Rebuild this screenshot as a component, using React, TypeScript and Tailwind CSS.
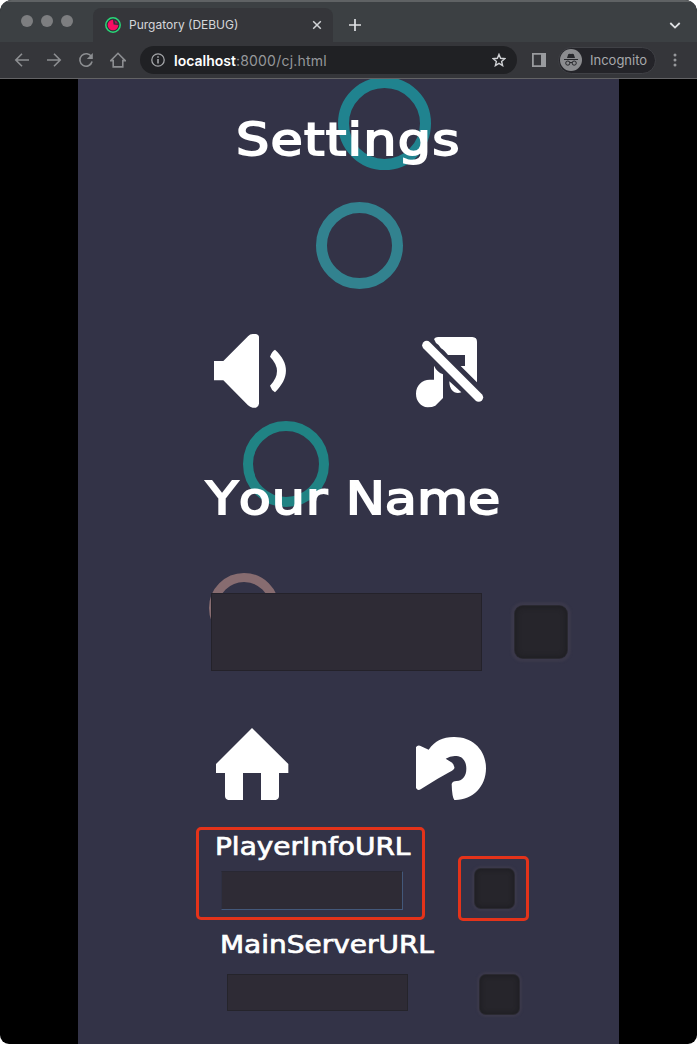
import React from 'react';

const gameText =
  'origin-left scale-x-[1.165] whitespace-nowrap font-["DejaVu_Sans",sans-serif] font-normal leading-none text-white [font-kerning:none]';

function BrowserTabs() {
  return (
    <div className="flex h-[42px] items-end border-t-2 border-[#5f6264] bg-[#3c4043]">
      <div className="flex h-[40px] w-[93px] items-center gap-2 pl-[21px] pb-[2px]">
        <span className="size-3 rounded-full bg-[#7d7e80]" />
        <span className="size-3 rounded-full bg-[#7d7e80]" />
        <span className="size-3 rounded-full bg-[#7d7e80]" />
      </div>
      <div className="flex h-[34px] w-[240px] items-center rounded-t-lg bg-[#35363a] pl-3 pr-[11px]">
        <svg className="size-4" viewBox="0 0 16 16">
          <circle cx="8" cy="8" r="7.2" fill="#33313a" stroke="#28d878" strokeWidth="1.5" />
          <path d="M8 2.7A5.3 5.3 0 1 0 13.3 8L8.6 7.6Z" fill="#f80d63" />
          <path d="M9.5 3.2A5.2 5.2 0 0 1 12.8 6.4L10.2 6.4Z" fill="#b01657" />
        </svg>
        <span className="ml-2 grow whitespace-nowrap font-[Inter,sans-serif] text-[12px] text-[#d5d7da]">
          Purgatory (DEBUG)
        </span>
        <svg className="size-[10px]" viewBox="0 0 10 10" stroke="#d2d4d7" strokeWidth="1.5">
          <path d="M1.2 1.2 8.8 8.8M8.8 1.2 1.2 8.8" />
        </svg>
      </div>
      <div className="flex h-[34px] grow items-center justify-between pl-4 pr-[16px]">
        <svg className="size-3" viewBox="0 0 12 12" stroke="#dfe1e4" strokeWidth="1.7">
          <path d="M6 0v12M0 6h12" />
        </svg>
        <svg className="h-[7px] w-[12px]" viewBox="0 0 12 7" fill="none" stroke="#dfe1e4" strokeWidth="1.8">
          <path d="M1.3 1 6 5.6 10.7 1" />
        </svg>
      </div>
    </div>
  );
}

function BrowserToolbar() {
  return (
    <div className="flex h-[37px] items-center border-b border-[#636365] bg-[#35363a] font-[Inter,sans-serif]">
      <div className="flex w-[140px] shrink-0 items-center gap-4 pl-[14px]">
        <svg className="size-4" viewBox="0 0 16 16" fill="none" stroke="#8c8e91" strokeWidth="1.6">
          <path d="M15 8H2M8 1.7 1.8 8 8 14.3" />
        </svg>
        <svg className="size-4" viewBox="0 0 16 16" fill="none" stroke="#8c8e91" strokeWidth="1.6">
          <path d="M1 8h13M8 1.7 14.2 8 8 14.3" />
        </svg>
        <svg className="size-4" viewBox="0 0 16 16" fill="none" stroke="#8c8e91" strokeWidth="1.6">
          <path d="M13.5 4.9A6.2 6.2 0 1 0 14.1 9.5" />
          <path d="M14.8 1v6H8.8Z" fill="#8c8e91" stroke="none" />
        </svg>
        <svg className="size-4" viewBox="0 0 16 16" fill="none" stroke="#8c8e91" strokeWidth="1.6">
          <path d="M.8 8.6 8 1.3l7.2 7.3h-2.4v6.3H3.2V8.6Z" />
        </svg>
      </div>
      <div className="flex h-7 w-[377px] shrink-0 items-center rounded-full bg-[#202124] pl-[11px] pr-[11px]">
        <svg className="size-[14px]" viewBox="0 0 14 14" fill="none" stroke="#a4a6a9" strokeWidth="1.3">
          <circle cx="7" cy="7" r="6.2" />
          <path d="M7 6v4.5M7 3.3v1.5" strokeWidth="1.6" />
        </svg>
        <span className="ml-[9px] grow whitespace-nowrap text-[14px] tracking-[0.015em] text-[#96989b]">
          <span className="font-semibold tracking-normal text-white">localhost</span>:8000/cj.html
        </span>
        <svg className="size-[14px]" viewBox="0 0 14 14" fill="none" stroke="#d0d2d5" strokeWidth="1.4">
          <path d="m7 1.4 1.6 3.9 4.2.4-3.2 2.8 1 4.1L7 10.4l-3.6 2.2 1-4.1L1.2 5.7l4.2-.4Z" />
        </svg>
      </div>
      <svg className="ml-[15px] size-[14px] shrink-0" viewBox="0 0 14 14">
        <path d="M.9.9h12.2v12.2H.9Z" fill="none" stroke="#999b9e" strokeWidth="1.8" />
        <path d="M9 0h5v14H9Z" fill="#999b9e" />
      </svg>
      <div className="ml-3 flex h-[27px] w-[98px] shrink-0 items-center rounded-full border border-[#404146] bg-[#242429] pl-[1px]">
        <svg className="size-[22px]" viewBox="0 0 22 22">
          <circle cx="11" cy="11" r="11" fill="#8b8c8f" />
          <path d="M7 9 8.2 5.2l1.2-.5 1.6.4 1.6-.4 1.2.5L15 9Z" fill="#26272b" />
          <path d="M4 10.5h14" stroke="#26272b" strokeWidth="1" />
          <g fill="none" stroke="#26272b" strokeWidth="1">
            <circle cx="7.8" cy="14.1" r="2.1" />
            <circle cx="14.2" cy="14.1" r="2.1" />
            <path d="M9.8 13.7q1.2-.6 2.4 0" />
          </g>
        </svg>
        <span className="ml-2 pt-px text-[13px] text-[#a8a9ac]">Incognito</span>
      </div>
      <svg className="ml-[17px] h-[14px] w-[4px] shrink-0" viewBox="0 0 4 14" fill="#96989b">
        <circle cx="2" cy="2" r="1.5" />
        <circle cx="2" cy="7" r="1.5" />
        <circle cx="2" cy="12" r="1.5" />
      </svg>
    </div>
  );
}

function Bubbles() {
  return (
    <>
      <span className="absolute left-[260px] top-[-2px] size-[93px] rounded-full border-[11px] border-[#20838f]" />
      <span className="absolute left-[238px] top-[123px] size-[87px] rounded-full border-[11px] border-[#32828f]" />
      <span className="absolute left-[165px] top-[342px] size-[86px] rounded-full border-[10.5px] border-[#208384]" />
      <span className="absolute left-[131px] top-[494px] size-[70px] rounded-full border-[9px] border-[#876c70]" />
    </>
  );
}

function PlainButton({ large = false }: { large?: boolean }) {
  return large ? (
    <button className="size-[52px] rounded-[8px] bg-[#26252b] shadow-[0_0_0_1px_#2a2931,0_0_2px_4px_#3b394b,inset_0_0_5px_1px_#1e1e22]" aria-label="Confirm" />
  ) : (
    <button className="size-[39px] rounded-[6px] bg-[#26252b] shadow-[0_0_0_1px_#2a2931,0_0_2px_3px_#3b394b,inset_0_0_4px_1px_#1e1e22]" aria-label="Confirm" />
  );
}

function SpeakerIcon() {
  return (
    <svg className="size-20" viewBox="30 30 240 240" fill="white">
      <path d="M42 123H70L144 49Q150 42 158 42H168Q177 44 177 52V251Q176 260 168 263H158Q150 262 144 256L70 181H42Z" />
      <path d="M225 89C270 130 268 174 225 217Q214 210 210 197Q252 153 210 110Q216 93 225 89Z" />
    </svg>
  );
}

function MusicOffIcon() {
  return (
    <svg className="size-20" viewBox="630 30 240 240" fill="white">
      <path d="M702 57Q706 51 714 51H817Q831 52 831 65V187L782 138H795V105H744Q732 90 723 85Q716 73 708 69Z" />
      <path d="M702 137Q710 155 729 163V234L706 257Q697 262 683 262C662 260 648 243 648 221C648 196 666 179 689 179H702Z" />
      <path d="M748 184 784 217C765 224 748 212 748 184Z" />
      <path d="M680 76 836 232" stroke="white" strokeWidth="27" strokeLinecap="round" />
    </svg>
  );
}

function HomeIcon() {
  return (
    <svg className="size-20" viewBox="60 30 240 240" fill="white">
      <path d="M186 39 295 147V174H267V244Q266 254 257 255H213V174H159V255H115Q106 254 105 244V174H78V147Z" />
    </svg>
  );
}

function UndoIcon() {
  return (
    <svg className="size-20" viewBox="660 30 240 240" fill="white">
      <path d="M678 97Q681 90 690 92L716 104C735 77 758 66 791 66C847 65 888 104 888 160C888 216 846 257 793 255Q786 246 785 207Q787 198 800 198C819 197 829 181 829 161C829 138 817 124 800 123Q782 121 767 131L784 142Q795 149 793 160Q792 165 779 171L743 191L692 223Q683 228 678 219Z" />
    </svg>
  );
}

export default function App() {
  return (
    <div className="bg-white">
      <div className="flex h-[1044px] w-[697px] flex-col overflow-hidden rounded-t-[12px] rounded-b-[9px] bg-black">
        <BrowserTabs />
        <BrowserToolbar />
        <main className="flex grow justify-center">
          <section className="relative isolate flex w-[541px] flex-col items-start overflow-hidden bg-[#333347]">
            <div className="absolute inset-0 -z-10">
              <Bubbles />
            </div>

            <h1 className={`ml-[158px] mt-[38px] text-[45px] tracking-[1.05px] [-webkit-text-stroke:1.8px_white] ${gameText}`}>Settings</h1>

            <div className="ml-[132px] mt-[168px] flex gap-[120px]">
              <SpeakerIcon />
              <MusicOffIcon />
            </div>

            <h2 className={`ml-[128px] mt-[66px] text-[45px] [-webkit-text-stroke:1.8px_white] ${gameText}`}>
              <span className="tracking-[0.7px]">Your </span>
              <span>Name</span>
            </h2>

            <div className="ml-[133px] mt-[72px] flex h-[78px] items-center gap-[33px]">
              <input className="h-[78px] w-[271px] border border-[#24222a] bg-[#2e2b35] outline-none" aria-label="Your Name" />
              <PlainButton large />
            </div>

            <div className="ml-[132px] mt-[54px] flex gap-[120px]">
              <HomeIcon />
              <UndoIcon />
            </div>

            <h3 className={`ml-[137px] mt-[30px] text-[24px] [-webkit-text-stroke:0.7px_white] ${gameText}`}>PlayerInfoURL</h3>
            <div className="ml-[143px] mt-[6px] flex h-[46px] items-center gap-[72px]">
              <input
                className="mt-[4px] h-[39px] w-[182px] border border-b-[#43587a] border-l-[#2e3042] border-r-[#43587a] border-t-[#292833] bg-[#2e2b35] outline-none"
                aria-label="PlayerInfoURL"
              />
              <PlainButton />
            </div>

            <h3 className={`ml-[142px] mt-[22px] text-[24px] [-webkit-text-stroke:0.7px_white] ${gameText}`}>MainServerURL</h3>
            <div className="ml-[149px] mt-[14px] flex h-[46px] items-center gap-[72px]">
              <input className="mb-[3px] h-[37px] w-[181px] border border-[#25242b] bg-[#2e2b35] outline-none" aria-label="MainServerURL" />
              <PlainButton />
            </div>

            <span className="absolute left-[118px] top-[748px] h-[93px] w-[229px] rounded-[5px] border-[3px] border-[#e4331a]" />
            <span className="absolute left-[380px] top-[777px] h-[65px] w-[71px] rounded-[5px] border-[3px] border-[#e4331a]" />
          </section>
        </main>
      </div>
    </div>
  );
}
